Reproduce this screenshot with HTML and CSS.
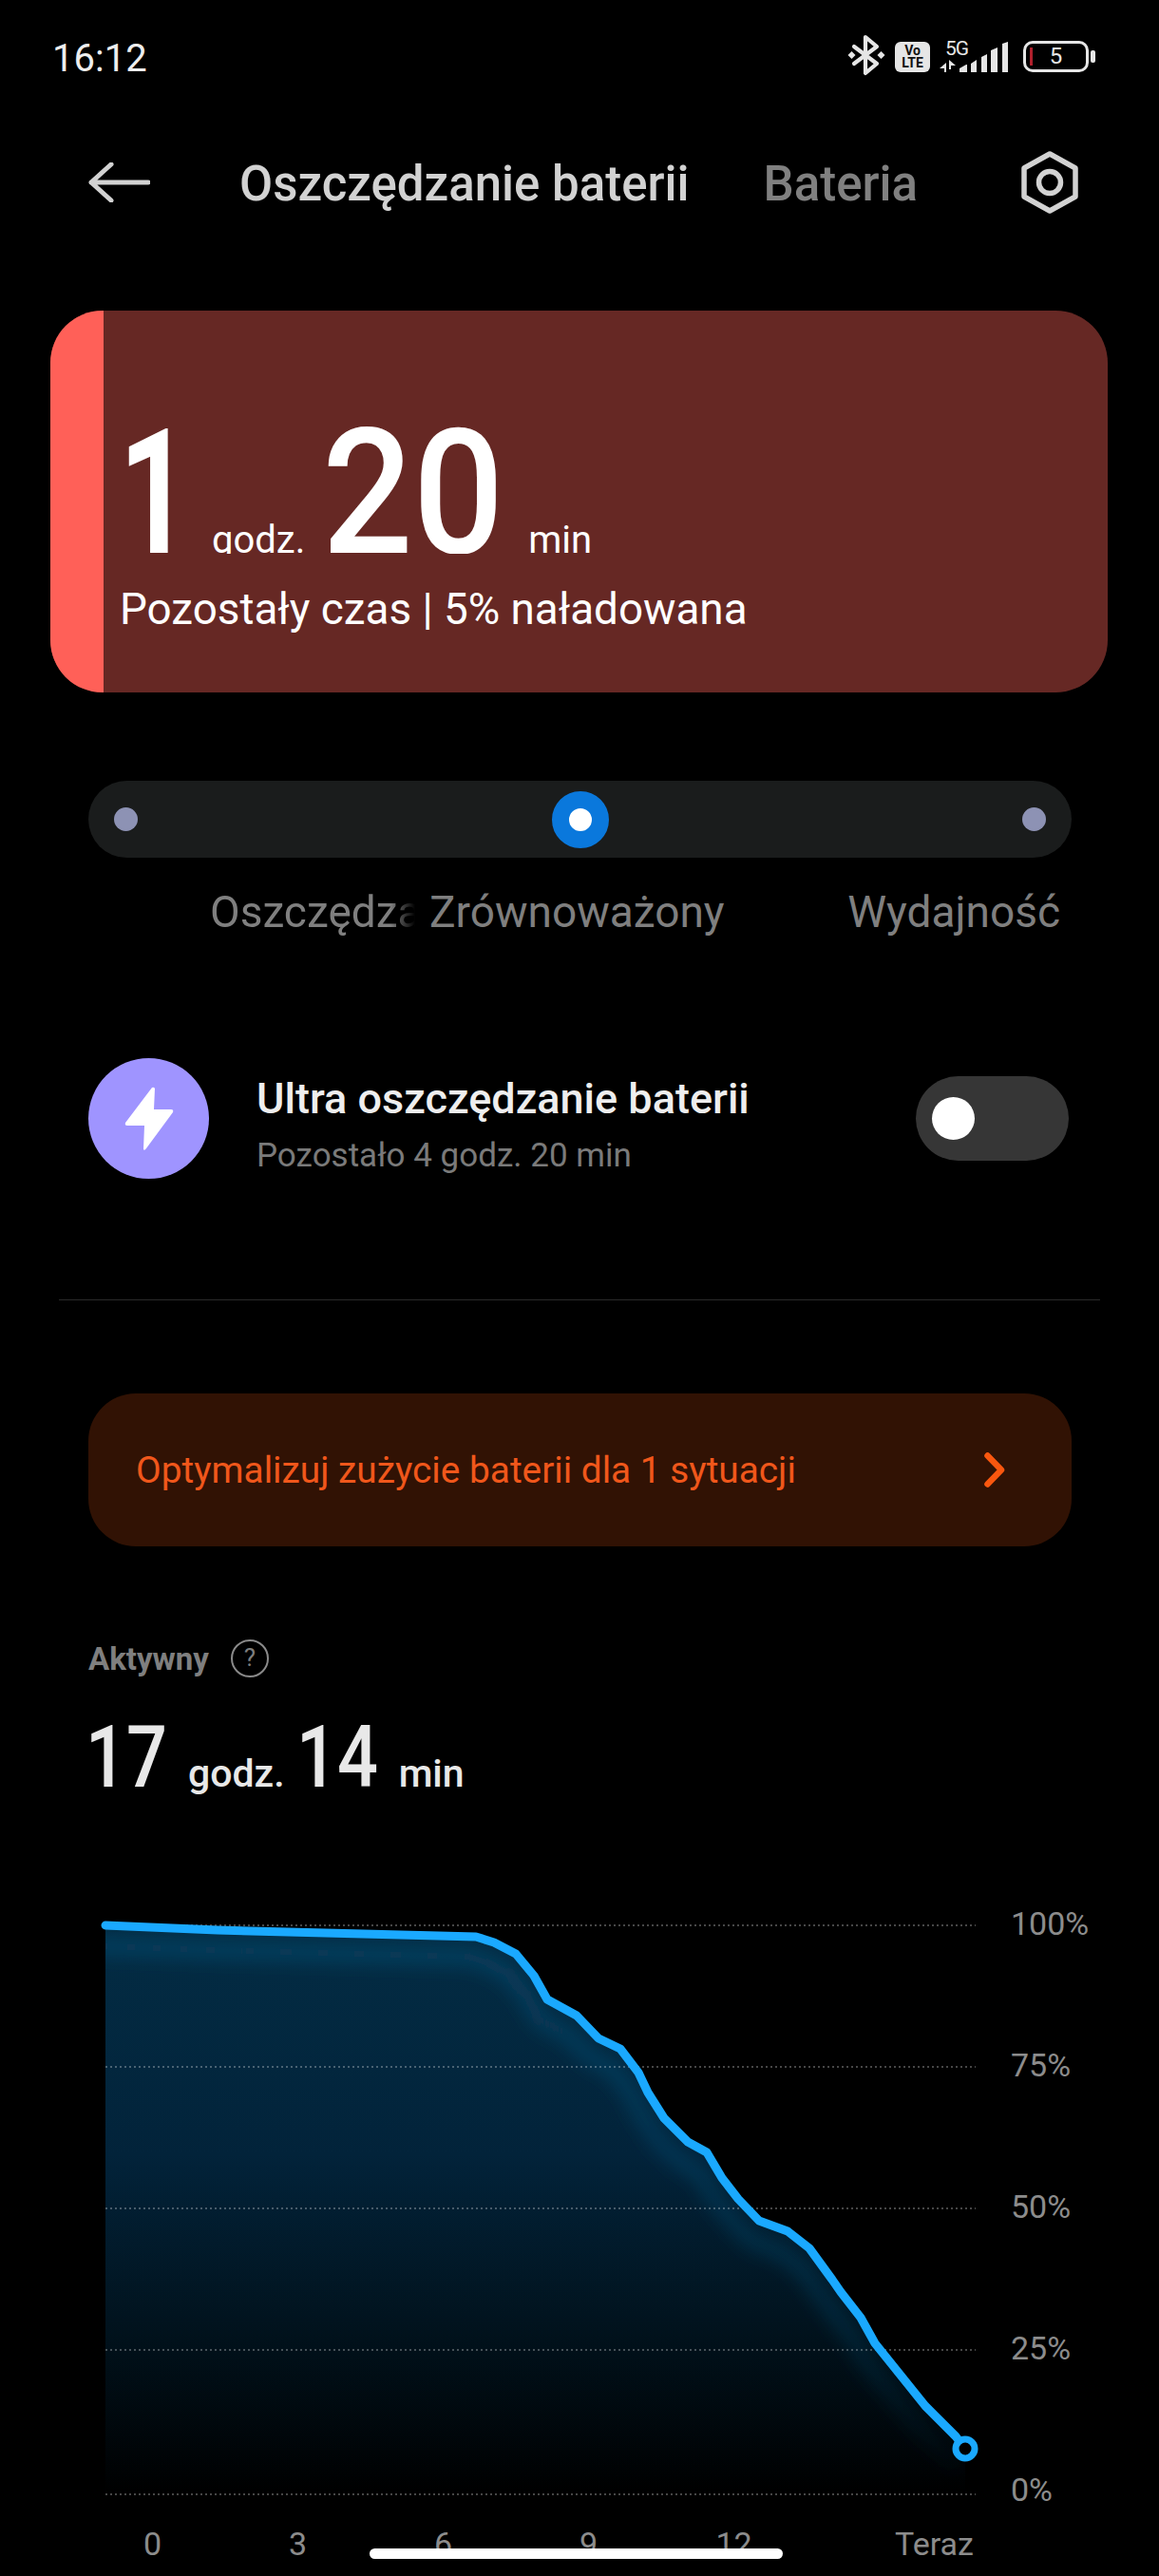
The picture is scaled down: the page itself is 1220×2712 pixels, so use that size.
FILE: index.html
```html
<!DOCTYPE html>
<html lang="pl">
<head>
    <meta charset="UTF-8">
    <meta name="viewport" content="width=device-width, initial-scale=1.0">
    <title>Oszczędzanie baterii</title>
    <link rel="stylesheet" href="styles.css">
</head>
<body>
    <div class="status-bar">
        <span class="clock">16:12</span>
        <div class="status-icons">
            <svg class="bt-icon" width="40" height="44" viewBox="0 0 40 44">
                <path d="M7 13 L31 31 L19 41 L19 3 L31 13 L7 31" fill="none" stroke="#e6e6e6" stroke-width="4.2" stroke-linejoin="round" stroke-linecap="round"/>
                <path d="M4.5 18 L8.5 22 L4.5 26 L0.5 22 Z M35.5 18 L39.5 22 L35.5 26 L31.5 22 Z" fill="#e6e6e6"/>
            </svg>
            <div class="volte"><span>Vo</span><span>LTE</span></div>
            <div class="network">
                <span class="net-type">5G</span>
                <svg class="net-arrows" width="17" height="13" viewBox="0 0 17 13">
                    <path d="M7 3 V13 H5 V9 H0 Z M10 0 V10 H12 V6 H17 Z" fill="#e6e6e6"/>
                </svg>
            </div>
            <svg class="signal" width="51" height="32" viewBox="0 0 51 32">
                <path d="M0 28 L7 24 H8 V32 H0 Z M12 23 L18 19 V32 H12 Z M23 16 L29 13 V32 H23 Z M33 9 L40 6 V32 H33 Z M45 2 L51 0 V32 H45 Z" fill="#e6e6e6"/>
            </svg>
            <div class="battery"><span class="battery-level"></span>5</div>
        </div>
    </div>

    <div class="nav">
        <svg class="back" width="65" height="42" viewBox="0 0 65 42">
            <path d="M63 21 H3 M24 2 L3 21 L24 40" fill="none" stroke="#d2d2d2" stroke-width="5" stroke-linecap="round" stroke-linejoin="round"/>
        </svg>
        <span class="nav-title">Oszczędzanie baterii</span>
        <span class="nav-tab">Bateria</span>
        <svg class="gear" width="62" height="66" viewBox="0 0 62 66">
            <path d="M31 3 L58 18 V48 L31 63 L4 48 V18 Z" fill="none" stroke="#d2d2d2" stroke-width="5.5" stroke-linejoin="round"/>
            <circle cx="31" cy="33" r="11.5" fill="none" stroke="#d2d2d2" stroke-width="5.5"/>
        </svg>
    </div>

    <div class="hero-card">
        <div class="hero-strip"></div>
        <div class="hero-body">
            <div class="hero-time">
                <span class="hero-num hero-one">1</span>
                <span class="hero-unit unit-hours">godz.</span>
                <span class="hero-num hero-rest">20</span>
                <span class="hero-unit unit-min">min</span>
            </div>
            <div class="hero-sub">Pozostały czas | 5% naładowana</div>
        </div>
    </div>

    <div class="mode-track">
        <span class="mode-dot"></span>
        <span class="mode-active"></span>
        <span class="mode-dot"></span>
    </div>
    <div class="mode-labels">
        <span class="mode-faded">Oszczędzanie</span>
        <span class="mode-center">Zrównoważony</span>
        <span class="mode-right">Wydajność</span>
    </div>

    <div class="ultra">
        <div class="ultra-icon">
            <svg width="52" height="68" viewBox="0 0 52 68">
                <path d="M29 1 L1 38 Q0 41 3 41 H21 L20 66 Q21 68 23 65 L51 27 Q52 24 49 24 H31 L32 2 Q31 0 29 1 Z" fill="#fff"/>
            </svg>
        </div>
        <div class="ultra-text">
            <div class="ultra-title">Ultra oszczędzanie baterii</div>
            <div class="ultra-sub">Pozostało 4 godz. 20 min</div>
        </div>
        <div class="toggle"><span class="toggle-knob"></span></div>
    </div>

    <div class="divider"></div>

    <div class="tip">
        <span>Optymalizuj zużycie baterii dla 1 sytuacji</span>
        <svg width="22" height="37" viewBox="0 0 22 37">
            <path d="M3.5 3.5 L18 18.5 L3.5 33.5" fill="none" stroke="#f9570f" stroke-width="6.5" stroke-linecap="round" stroke-linejoin="round"/>
        </svg>
    </div>

    <div class="active-label">
        <span>Aktywny</span>
        <span class="help">?</span>
    </div>
    <div class="active-time">
        <span class="active-num">17</span>
        <span class="active-unit">godz.</span>
        <span class="active-num">14</span>
        <span class="active-unit">min</span>
    </div>

    <div class="chart">
        <svg class="plot" width="925" height="620" viewBox="106 2020 925 620">
            <defs>
                <linearGradient id="areaFill" gradientUnits="userSpaceOnUse" x1="0" y1="2030" x2="0" y2="2626">
                    <stop offset="0" stop-color="#032c44"/>
                    <stop offset="0.4" stop-color="#02233a"/>
                    <stop offset="0.7" stop-color="#01131e"/>
                    <stop offset="1" stop-color="#000"/>
                </linearGradient>
                <linearGradient id="glowFill" gradientUnits="userSpaceOnUse" x1="0" y1="2030" x2="0" y2="2626">
                    <stop offset="0" stop-color="#0f5f8c" stop-opacity="0.5"/>
                    <stop offset="0.7" stop-color="#0f5f8c" stop-opacity="0.35"/>
                    <stop offset="1" stop-color="#0f5f8c" stop-opacity="0"/>
                </linearGradient>
                <clipPath id="areaClip">
                    <path d="M111 2027 L229 2032 L501 2039 L520 2045 L543 2057 L562 2080 L576 2105 L607 2122 L630 2146 L653 2157 L672 2182 L682 2203 L699 2230 L724 2255 L744 2266 L760 2293 L777 2315 L799 2338 L829 2349 L852 2367 L876 2400 L885 2413 L906 2440 L921 2467 L974 2533 L1006 2565 L1016 2578 V2626 H111 Z"/>
                </clipPath>
                <filter id="soft" x="-10%" y="-10%" width="120%" height="120%">
                    <feGaussianBlur stdDeviation="10"/>
                </filter>
            </defs>
            <path d="M111 2027 L229 2032 L501 2039 L520 2045 L543 2057 L562 2080 L576 2105 L607 2122 L630 2146 L653 2157 L672 2182 L682 2203 L699 2230 L724 2255 L744 2266 L760 2293 L777 2315 L799 2338 L829 2349 L852 2367 L876 2400 L885 2413 L906 2440 L921 2467 L974 2533 L1006 2565 L1016 2578 V2626 H111 Z" fill="url(#areaFill)"/>
            <g clip-path="url(#areaClip)">
                <path d="M90 2048 L229 2053 L501 2060 L520 2066 L543 2078 L562 2101 L576 2126 L607 2143 L630 2167 L653 2178 L672 2203 L682 2224 L699 2251 L724 2276 L744 2287 L760 2314 L777 2336 L799 2359 L829 2370 L852 2388 L876 2421 L885 2434 L906 2461 L921 2488 L974 2554 L1006 2586 L1016 2599" transform="translate(-8 0)" fill="none" stroke="url(#glowFill)" stroke-width="14" filter="url(#soft)"/>
            </g>
            <g class="grid-lines">
                <line x1="111" y1="2027" x2="1027" y2="2027"/>
                <line x1="111" y1="2176" x2="1027" y2="2176"/>
                <line x1="111" y1="2325" x2="1027" y2="2325"/>
                <line x1="111" y1="2474" x2="1027" y2="2474"/>
                <line x1="111" y1="2626" x2="1027" y2="2626"/>
            </g>
            <path d="M111 2027 L229 2032 L501 2039 L520 2045 L543 2057 L562 2080 L576 2105 L607 2122 L630 2146 L653 2157 L672 2182 L682 2203 L699 2230 L724 2255 L744 2266 L760 2293 L777 2315 L799 2338 L829 2349 L852 2367 L876 2400 L885 2413 L906 2440 L921 2467 L974 2533 L1006 2565 L1016 2578" fill="none" stroke="#1aa9ff" stroke-width="9" stroke-linecap="round" stroke-linejoin="round"/>
            <circle cx="1016" cy="2578" r="10" fill="#000" stroke="#1aa9ff" stroke-width="7"/>
        </svg>
        <div class="y-labels">
            <span>100%</span>
            <span>75%</span>
            <span>50%</span>
            <span>25%</span>
            <span>0%</span>
        </div>
    </div>
    <div class="x-labels">
        <span>0</span>
        <span>3</span>
        <span>6</span>
        <span>9</span>
        <span>12</span>
        <span class="x-now">Teraz</span>
    </div>

    <div class="home-bar"></div>
</body>
</html>
```

FILE: styles.css
```css
* {
    box-sizing: border-box;
}
body {
    margin: 0;
    width: 1220px;
    height: 2712px;
    overflow: hidden;
    position: relative;
    background: #000;
    color: #fff;
    font-family: 'Roboto', 'Liberation Sans', sans-serif;
}

/* status bar */
.status-bar {
    height: 122px;
    padding: 0 74px 0 55px;
    display: flex;
    align-items: center;
    justify-content: space-between;
}
.clock {
    font-size: 40px;
    color: #eee;
}
.status-icons {
    display: flex;
    align-items: flex-end;
    height: 40px;
    margin-bottom: 10px;
}
.bt-icon {
    margin-bottom: -4px;
}
.volte {
    width: 37px;
    height: 32px;
    margin-left: 10px;
    background: #e6e6e6;
    border-radius: 6px;
    color: #111;
    font-size: 14px;
    font-weight: 700;
    line-height: 13px;
    display: flex;
    flex-direction: column;
    align-items: center;
    justify-content: center;
}
.network {
    width: 32px;
    margin-left: 10px;
    display: flex;
    flex-direction: column;
}
.net-type {
    font-size: 21px;
    line-height: 20px;
    letter-spacing: -1px;
    color: #e6e6e6;
    margin-left: 6px;
}
.net-arrows {
    display: block;
    margin-top: 2px;
}
.signal {
    margin-left: -11px;
}
.battery {
    position: relative;
    width: 69px;
    height: 33px;
    margin-left: 16px;
    border: 3px solid #e6e6e6;
    border-radius: 10px;
    color: #e6e6e6;
    font-size: 24px;
    line-height: 27px;
    text-align: center;
}
.battery::after {
    content: '';
    position: absolute;
    right: -10px;
    top: 7px;
    width: 5px;
    height: 13px;
    background: #e6e6e6;
    border-radius: 2px;
}
.battery-level {
    position: absolute;
    left: 4px;
    top: 4px;
    width: 3px;
    height: 19px;
    background: #b0202c;
}

/* top navigation */
.nav {
    height: 140px;
    padding: 0 84px 0 93px;
    display: flex;
    align-items: center;
}
.nav-title {
    margin: 2px 0 0 94px;
    font-size: 51px;
    font-weight: 500;
    color: #d2d2d2;
}
.nav-tab {
    margin: 2px 0 0 78px;
    font-size: 51px;
    font-weight: 500;
    color: #808080;
}
.gear {
    margin-left: auto;
}

/* remaining time card */
.hero-card {
    display: flex;
    height: 402px;
    margin: 65px 54px 0 53px;
    background: #662824;
    border-radius: 55px;
    overflow: hidden;
}
.hero-strip {
    width: 56px;
    background: #ff6058;
}
.hero-body {
    padding: 101px 0 0 16px;
}
.hero-time {
    display: flex;
    align-items: baseline;
    height: 155px;
    overflow: hidden;
}
.hero-num {
    font-size: 183px;
    font-weight: 500;
    line-height: 1;
    transform-origin: left;
}
.hero-one {
    width: 75px;
    font-weight: 700;
    transform: scaleX(0.72);
}
.hero-rest {
    width: 189px;
    margin-left: 18px;
    transform: scaleX(0.92);
}
.hero-unit {
    font-size: 40px;
}
.unit-hours {
    margin-left: 23px;
}
.unit-min {
    margin-left: 28px;
}
.hero-sub {
    margin: 33px 0 0 1px;
    font-size: 45.8px;
    line-height: 52px;
}

/* power mode slider */
.mode-track {
    display: flex;
    align-items: center;
    justify-content: space-between;
    height: 81px;
    margin: 93px 92px 0 93px;
    padding: 0 27px;
    background: #1a1c1c;
    border-radius: 41px;
}
.mode-dot {
    width: 25px;
    height: 25px;
    background: #8d92b4;
    border-radius: 50%;
}
.mode-active {
    width: 60px;
    height: 60px;
    background: #fff;
    border: 18px solid #0a78dc;
    border-radius: 50%;
}
.mode-labels {
    display: flex;
    height: 56px;
    margin-top: 29px;
    padding: 0 104px 0 221px;
    font-size: 46px;
    line-height: 56px;
    color: #7f7f7f;
}
.mode-faded {
    width: 216px;
    overflow: hidden;
    white-space: nowrap;
    -webkit-mask-image: linear-gradient(90deg, #000 88%, transparent);
    mask-image: linear-gradient(90deg, #000 88%, transparent);
}
.mode-center {
    margin-left: 15px;
}
.mode-right {
    margin-left: auto;
}

/* ultra saver row */
.ultra {
    display: flex;
    align-items: center;
    height: 127px;
    margin-top: 126px;
    padding: 0 95px 0 93px;
}
.ultra-icon {
    width: 127px;
    height: 127px;
    background: #9f94ff;
    border-radius: 50%;
    display: flex;
    align-items: center;
    justify-content: center;
}
.ultra-text {
    align-self: flex-start;
    margin: 17px 0 0 50px;
}
.ultra-title {
    font-size: 45px;
    font-weight: 500;
    line-height: 52px;
    color: #eee;
}
.ultra-sub {
    margin-top: 14px;
    font-size: 35px;
    line-height: 40px;
    color: #7a7a7a;
}
.toggle {
    display: flex;
    align-items: center;
    width: 161px;
    height: 89px;
    margin-left: auto;
    padding-left: 17px;
    background: #363636;
    border-radius: 45px;
}
.toggle-knob {
    width: 45px;
    height: 45px;
    background: #fff;
    border-radius: 50%;
}
.divider {
    height: 1px;
    margin: 127px 62px 0;
    background: #2a2a2a;
}

/* optimise banner */
.tip {
    display: flex;
    align-items: center;
    justify-content: space-between;
    height: 161px;
    margin: 98px 92px 0 93px;
    padding: 0 70px 0 50px;
    background: #311204;
    border-radius: 50px;
    font-size: 38.8px;
    color: #f0571b;
}

/* usage summary */
.active-label {
    display: flex;
    align-items: center;
    height: 40px;
    margin-top: 98px;
    padding-left: 93px;
    font-size: 33px;
    font-weight: 700;
    color: #7f7f7f;
}
.help {
    width: 40px;
    height: 40px;
    margin-left: 23px;
    border: 2.5px solid #8a8a8a;
    border-radius: 50%;
    font-size: 26px;
    font-weight: 400;
    line-height: 35px;
    text-align: center;
}
.active-time {
    display: flex;
    align-items: baseline;
    height: 110px;
    margin-top: 30px;
    padding-left: 90px;
    color: #e8e8e8;
}
.active-num {
    width: 85px;
    font-size: 90px;
    font-weight: 500;
    line-height: 110px;
    transform: scaleX(0.84);
    transform-origin: left;
}
.active-num + .active-unit {
    margin-left: 23px;
}
.active-unit + .active-num {
    margin-left: 12px;
}
.active-unit {
    font-size: 41px;
    font-weight: 500;
}

/* battery chart */
.chart {
    display: flex;
    height: 638px;
    margin-top: 98px;
    padding-left: 106px;
}
.plot {
    display: block;
    margin-top: 16px;
}
.grid-lines line {
    stroke: rgba(255, 255, 255, 0.28);
    stroke-width: 2;
    stroke-dasharray: 2 3;
}
.y-labels {
    display: flex;
    flex-direction: column;
    justify-content: space-between;
    margin-left: 33px;
    font-size: 34px;
    line-height: 42px;
    color: #8c8c8c;
}
.x-labels {
    display: flex;
    margin-top: 16px;
    padding-left: 84px;
    font-size: 34px;
    line-height: 40px;
    color: #8c8c8c;
}
.x-labels span {
    width: 153px;
    text-align: center;
}
.x-labels .x-now {
    width: auto;
    margin-left: 93px;
}
.home-bar {
    position: absolute;
    left: 389px;
    top: 2683px;
    width: 435px;
    height: 11px;
    background: #fff;
    border-radius: 6px;
}
```
